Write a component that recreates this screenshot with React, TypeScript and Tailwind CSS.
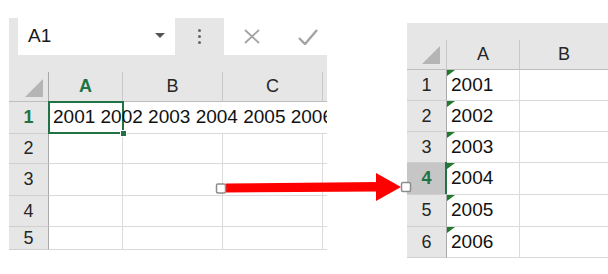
import React from 'react';

const GREEN = '#217346';

function CornerTriangle({ className }: { className: string }) {
  return (
    <svg className={className} width="18" height="18" viewBox="0 0 18 18">
      <polygon points="18,0 18,18 0,18" fill="#b5b5b5" />
    </svg>
  );
}

function ErrorMark() {
  return (
    <svg className="absolute left-0 top-0" width="8" height="6" viewBox="0 0 8 6">
      <polygon points="0,0 8,0 0,6" fill="#1f7a2e" />
    </svg>
  );
}

function LeftSheet() {
  const head = 'flex items-center justify-center border-b border-r border-[#c9c9c9] bg-[#e6e6e6] text-[18px] text-[#262626]';
  const rowHead = 'flex items-center justify-center border-b border-r border-b-[#cfcfcf] border-r-[#a9a9a9] bg-[#e6e6e6] text-[18px] text-[#262626]';
  const cell = 'border-b border-r border-[#dadada] bg-white';
  const rows = ['2', '3', '4', '5'];

  return (
    <div className="ml-[9px] mt-[18px] flex h-[232px] w-[318px] shrink-0 flex-col overflow-hidden">
      {/* name box + formula toolbar */}
      <div className="flex h-[37px] shrink-0">
        <div className="w-[9px] bg-[#e6e6e6]" />
        <div className="flex w-[157px] items-center justify-between bg-white pl-[10px] pr-[10px]">
          <span className="text-[19px] text-[#1a1a1a]">A1</span>
          <svg width="10" height="5" viewBox="0 0 10 5" className="mb-[2px]">
            <polygon points="0,0 10,0 5,5" fill="#555" />
          </svg>
        </div>
        <div className="flex w-[49px] flex-col items-center justify-center gap-[3px] bg-[#e6e6e6] pb-[1px]">
          <span className="h-[3px] w-[3px] rounded-full bg-[#666]" />
          <span className="h-[3px] w-[3px] rounded-full bg-[#666]" />
          <span className="h-[3px] w-[3px] rounded-full bg-[#666]" />
        </div>
        <div className="flex flex-1 items-center gap-[37px] bg-white pl-[19px]">
          <svg width="18" height="15" viewBox="0 0 18 15">
            <path d="M2 1 L16 14 M16 1 L2 14" stroke="#a3a3a3" strokeWidth="1.8" fill="none" />
          </svg>
          <svg width="20" height="16" viewBox="0 0 20 16">
            <path d="M1 9 L7 15 L19 1" stroke="#a3a3a3" strokeWidth="2.4" fill="none" />
          </svg>
        </div>
      </div>
      <div className="h-[17px] shrink-0 bg-[#e6e6e6]" />

      {/* grid */}
      <div className="grid grid-cols-[40px_74px_100px_100px_4px] grid-rows-[30px_32px_30px_32px_31px_23px]">
        <div className="relative border-b border-r border-b-[#bdbdbd] border-r-[#a9a9a9] bg-[#e6e6e6]">
          <CornerTriangle className="absolute bottom-[4px] right-[5px]" />
        </div>
        <div className={`${head} border-b-[#bdbdbd] bg-[#d2d2d2] font-bold`} style={{ color: GREEN }}>A</div>
        <div className={`${head} border-b-[#bdbdbd]`}>B</div>
        <div className={`${head} border-b-[#bdbdbd]`}>C</div>
        <div className="border-b border-[#bdbdbd] bg-[#e6e6e6]" />

        <div className={`${rowHead} bg-[#d2d2d2] font-bold`} style={{ color: GREEN }}>1</div>
        <div className="relative flex items-center border-b border-[#dadada] bg-white pl-[4px]">
          <span className="relative z-10 whitespace-nowrap text-[19px] text-[#111]">
            2001 2002 2003 2004 2005 2006
          </span>
          <div className="absolute -bottom-[1px] -left-[1px] -right-[1px] -top-[1px] border-2 border-[#217346]" />
          <div className="absolute -bottom-[4px] -right-[4px] z-20 h-[7px] w-[7px] border border-white bg-[#217346]" />
        </div>
        <div className="border-b border-[#dadada] bg-white" />
        <div className="border-b border-[#dadada] bg-white" />
        <div className="border-b border-[#dadada] bg-white" />

        {rows.map((r) => (
          <React.Fragment key={r}>
            <div className={rowHead}>{r}</div>
            <div className={cell} />
            <div className={cell} />
            <div className={cell} />
            <div className="border-b border-[#dadada] bg-white" />
          </React.Fragment>
        ))}
      </div>
    </div>
  );
}

function RightSheet() {
  const years = ['2001', '2002', '2003', '2004', '2005', '2006'];
  return (
    <div className="ml-[80px] mt-[23px] flex h-[235px] w-[201px] shrink-0 flex-col overflow-hidden">
      <div className="h-[17px] shrink-0 bg-[#e6e6e6]" />
      <div className="grid grid-cols-[40px_73px_88px] grid-rows-[30px_31px_31px_31px_32px_32px_31px]">
        <div className="relative border-b border-r border-b-[#bdbdbd] border-r-[#c9c9c9] bg-[#e6e6e6]">
          <CornerTriangle className="absolute bottom-[5px] right-[6px]" />
        </div>
        <div className="flex items-center justify-center border-b border-r border-b-[#bdbdbd] border-r-[#c9c9c9] bg-[#e6e6e6] text-[18px] text-[#262626]">A</div>
        <div className="flex items-center justify-center border-b border-b-[#bdbdbd] bg-[#e6e6e6] text-[18px] text-[#262626]">B</div>

        {years.map((y, i) => {
          const sel = i === 3;
          return (
            <React.Fragment key={y}>
              <div
                className={`flex items-center justify-center border-b border-r border-b-[#cfcfcf] border-r-[#a9a9a9] text-[18px] ${
                  sel ? 'bg-[#c6c6c6] font-bold' : 'bg-[#e6e6e6] text-[#262626]'
                }`}
                style={sel ? { color: GREEN } : undefined}
              >
                {i + 1}
              </div>
              <div className="relative flex items-center border-b border-r border-[#dadada] bg-white pl-[4px] text-[19px] text-[#111]">
                {sel && <div className="absolute -left-[2px] -top-[1px] bottom-0 w-[2px] bg-[#217346]" />}
                <ErrorMark />
                {y}
              </div>
              <div className="border-b border-[#dadada] bg-white" />
            </React.Fragment>
          );
        })}
      </div>
    </div>
  );
}

export default function App() {
  return (
    <div className="relative flex h-[274px] w-[608px] overflow-hidden bg-white font-['Liberation_Sans',Arial,sans-serif]">
      <LeftSheet />
      <RightSheet />

      {/* arrow drawn over both sheets */}
      <svg className="pointer-events-none absolute left-0 top-0" width="608" height="274" viewBox="0 0 608 274">
        <polygon points="226,183.5 379,182 379,191.5 226,192.5" fill="#ff0000" />
        <polygon points="376,173 401,187 376,201" fill="#ff0000" />
        <rect x="216.5" y="184" width="9" height="9" rx="1.5" fill="#fff" stroke="#8c8c8c" strokeWidth="1.5" />
        <rect x="401.5" y="182.5" width="9" height="9" rx="1.5" fill="#fff" stroke="#8c8c8c" strokeWidth="1.5" />
      </svg>
    </div>
  );
}
